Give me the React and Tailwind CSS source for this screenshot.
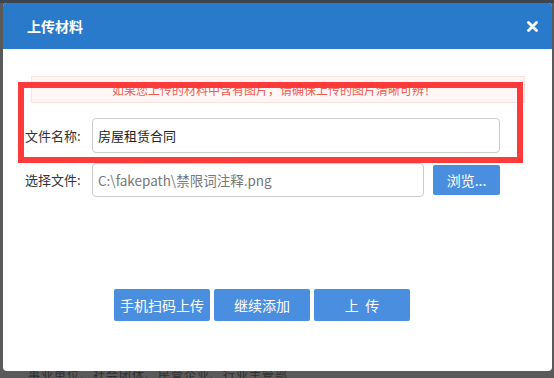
export default function App() {
  return (
    <div className="w-[554px] h-[378px] bg-[#5a5a5a] pt-[3px] pl-[3px] overflow-hidden font-['Noto_Sans_CJK_SC',sans-serif] relative">
      {/* faint page text behind the overlay */}
      <div className="absolute left-[28px] top-[369px] text-[12px] leading-none text-[#2e2e2e] tracking-[1px]">
        事业单位、社会团体、民营企业、行业主管部
      </div>
      <div className="absolute left-0 top-0 w-[554px] h-[3px] bg-[#3d4650]" />

      <div className="relative w-[549px] h-[368px] bg-white rounded-[4px] overflow-hidden flex flex-col">
        {/* header */}
        <div className="h-[46px] bg-[#2a7acc] flex items-center">
          <span className="ml-[24px] text-white text-[14px] font-bold">上传材料</span>
          <div className="flex-1" />
          <svg className="mr-[14px]" width="11" height="11" viewBox="0 0 11 11">
            <path d="M1.5 1.5 L9.5 9.5 M9.5 1.5 L1.5 9.5" stroke="#fff" strokeWidth="2.8" strokeLinecap="round" />
          </svg>
        </div>

        {/* body */}
        <div className="flex flex-col">
          <div className="mt-[27px] ml-[28px] w-[494px] h-[27px] bg-[#fff6f5] border border-[#fde2de] flex items-center justify-center pr-[8px]">
            <span className="text-[12px] text-[#ec5c50] leading-none">如果您上传的材料中含有图片，请确保上传的图片清晰可辨！</span>
          </div>

          <div className="mt-[15px] ml-[22px] flex items-center">
            <span className="w-[67px] text-[13px] text-[#333]">文件名称:</span>
            <div className="w-[408px] h-[35px] border border-[#ccc] rounded-[4px] flex items-center pl-[5px] text-[13px] text-[#222]">
              房屋租赁合同
            </div>
          </div>

          <div className="mt-[10px] ml-[22px] flex items-center">
            <span className="w-[67px] text-[13px] text-[#333]">选择文件:</span>
            <div className="w-[332px] h-[34px] border border-[#ccc] rounded-[4px] flex items-center pl-[5px] text-[13.5px] text-[#777]">
              C:\fakepath\禁限词注释.png
            </div>
            <button className="ml-[9px] w-[67px] h-[30px] bg-[#4a8fdf] rounded-[2px] text-white text-[14px] flex items-center justify-center">
              浏览...
            </button>
          </div>

          <div className="mt-[92px] ml-[111px] flex gap-[4px]">
            <button className="w-[96px] h-[32px] bg-[#4a8fdf] rounded-[2px] text-white text-[14px]">手机扫码上传</button>
            <button className="w-[96px] h-[32px] bg-[#4a8fdf] rounded-[2px] text-white text-[14px]">继续添加</button>
            <button className="w-[96px] h-[32px] bg-[#4a8fdf] rounded-[2px] text-white text-[14px]">上&nbsp;&nbsp;传</button>
          </div>
        </div>

        {/* red annotation box */}
        <div className="absolute left-[15px] top-[79px] w-[505px] h-[81px] border-[6px] border-[#ff3a3a]" />
      </div>
    </div>
  );
}
